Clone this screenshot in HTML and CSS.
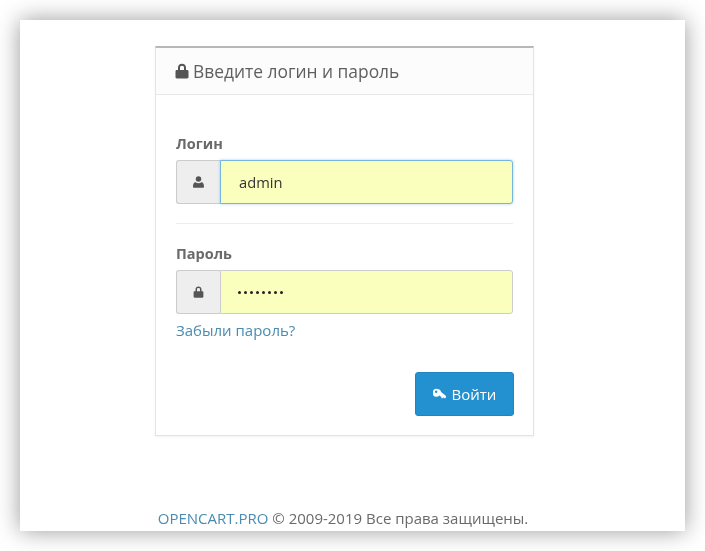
FILE: index.html
```html
<!DOCTYPE html>
<html lang="ru">

<head>
  <meta charset="UTF-8">
  <title>Авторизация</title>
  <link rel="stylesheet" href="styles.css">
</head>

<body>
  <div class="window">
    <div class="panel">
      <div class="panel-heading">
        <svg class="heading-icon" viewBox="0 0 14 16"><path d="M3 7V4.600C3 2.300 4.700.8 7 .8s4 1.500 4 3.800V7h1.200c.7 0 1.300.6 1.300 1.300v6c0 .7-.6 1.200-1.300 1.200H1.800C1.100 15.500.5 15 .5 14.300v-6C.5 7.600 1.100 7 1.800 7zm2 0h4V4.600C9 3.400 8.200 2.700 7 2.700s-2 .7-2 1.900z"/></svg>
        <span>Введите логин и пароль</span>
      </div>
      <form class="panel-body">
        <label class="field-label">Логин</label>
        <div class="input-group">
          <span class="addon">
            <svg class="addon-icon" viewBox="0 0 12 13"><circle cx="6" cy="3.300" r="3"/><path d="M.8 12.800c-.5 0-.8-.4-.8-.9C0 9.500.6 6.800 2.800 6.800c.8.700 2 1.100 3.200 1.100s2.400-.4 3.200-1.100c2.200 0 2.800 2.700 2.800 5.100 0 .5-.3.900-.8.900z"/></svg>
          </span>
          <div class="input input-focus">admin</div>
        </div>
        <hr class="divider">
        <label class="field-label">Пароль</label>
        <div class="input-group">
          <span class="addon">
            <svg class="addon-icon" viewBox="0 0 14 16"><path d="M3 7V4.600C3 2.300 4.700.8 7 .8s4 1.500 4 3.800V7h1.200c.7 0 1.300.6 1.300 1.300v6c0 .7-.6 1.200-1.300 1.200H1.800C1.100 15.500.5 15 .5 14.300v-6C.5 7.600 1.100 7 1.800 7zm2 0h4V4.600C9 3.400 8.200 2.700 7 2.700s-2 .7-2 1.900z"/></svg>
          </span>
          <div class="input input-dots">
            <i></i><i></i><i></i><i></i><i></i><i></i><i></i><i></i>
          </div>
        </div>
        <a class="forgot" href="#">Забыли пароль?</a>
        <div class="actions">
          <button class="btn" type="button">
            <svg class="btn-icon" viewBox="0 0 15 13"><path fill-rule="evenodd" d="M4.500.5a4.300 4.300 0 0 1 4.200 3.400l5.300 4.300v1.300l-.9 1h-1l-.9-.8-.8.9-1.300-.2-.2-1.200-2-1.600A4.300 4.300 0 1 1 4.500.5zM3.400 2.300a1.300 1.300 0 1 0 0 2.600 1.300 1.300 0 0 0 0-2.600z"/></svg>
            Войти
          </button>
        </div>
      </form>
    </div>
    <footer class="footer"><a href="#">OPENCART.PRO</a> © 2009-2019 Все права защищены.</footer>
  </div>
</body>

</html>
```

FILE: styles.css
```css
body {
  margin: 0;
  height: 551px;
  overflow: hidden;
  background: #fff;
  font-family: "Open Sans", sans-serif;
  color: #666;
}

.window {
  margin: 20px 20px 0;
  width: 665px;
  height: 511px;
  background: #fff;
  box-shadow: 0 0 22px rgba(0, 0, 0, 0.4);
  display: flex;
  flex-direction: column;
  align-items: center;
  filter: blur(0.45px);
}

.panel {
  margin: 26px 16px 0 0;
  width: 379px;
  height: 390px;
  box-sizing: border-box;
  border: 1px solid #e4e4e4;
  border-top: 2px solid #b8b8b8;
  box-shadow: 0 1px 2px rgba(0, 0, 0, 0.06);
}

.panel-heading {
  height: 47px;
  box-sizing: border-box;
  padding: 0 19px;
  display: flex;
  align-items: center;
  gap: 4px;
  background: #fcfcfc;
  border-bottom: 1px solid #e8e8e8;
  font-size: 17.400px;
  color: #5f5f5f;
}

.heading-icon {
  width: 14px;
  height: 16px;
  fill: #555;
}

.panel-body {
  padding: 40px 20px 0 20px;
  display: flex;
  flex-direction: column;
}

.field-label {
  font-size: 14.500px;
  font-weight: 700;
  line-height: 18px;
  color: #6a6a6a;
  margin-bottom: 7px;
}

.input-group {
  display: flex;
  height: 44px;
}

.addon {
  width: 44px;
  box-sizing: border-box;
  display: flex;
  align-items: center;
  justify-content: center;
  background: #eee;
  border: 1px solid #ccc;
  border-right: 0;
  border-radius: 3px 0 0 3px;
}

.addon-icon {
  width: 11px;
  height: 12px;
  fill: #555;
}

.input {
  flex: 1;
  box-sizing: border-box;
  display: flex;
  align-items: center;
  padding-left: 18px;
  background: #fbffbd;
  border: 1px solid #ccc;
  border-radius: 0 3px 3px 0;
  font-size: 14.700px;
  color: #333;
}

.input-focus {
  border-color: #74b6dc;
  box-shadow: 0 0 3px rgba(102, 175, 233, 0.6);
}

.input-dots {
  gap: 3px;
  padding-left: 17px;
}

.input-dots i {
  width: 3px;
  height: 3px;
  border-radius: 50%;
  background: #222;
}

.divider {
  width: 100%;
  margin: 19px 0 21px;
  border: 0;
  border-top: 1px solid #eee;
}

.forgot {
  margin-top: 6px;
  font-size: 15px;
  line-height: 20px;
  color: #4a8cb0;
  text-decoration: none;
}

.actions {
  margin: 32px -1px 0 0;
  display: flex;
  justify-content: flex-end;
}

.btn {
  width: 99px;
  height: 44px;
  display: flex;
  align-items: center;
  justify-content: center;
  gap: 5px;
  padding: 0;
  background: #2390cf;
  border: 1px solid #1f85c0;
  border-radius: 3px;
  font-family: inherit;
  font-size: 15px;
  color: #fff;
}

.btn-icon {
  width: 14px;
  height: 13px;
  fill: #fff;
}

.footer {
  margin: auto 19px 0 0;
  padding-bottom: 4px;
  font-size: 15px;
  line-height: 18px;
  color: #6a6a6a;
}

.footer a {
  color: #4a8cb0;
  text-decoration: none;
}
```
